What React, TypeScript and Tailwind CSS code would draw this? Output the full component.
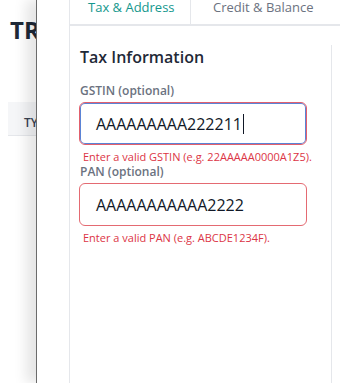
import type { ReactElement } from "react";

const FONT = "font-['Open_Sans','Noto_Sans',sans-serif]";

interface FieldProps {
  label: string;
  value: string;
  error: string;
  focused?: boolean;
}

function Field({ label, value, error, focused = false }: FieldProps): ReactElement {
  return (
    <div>
      <div className="text-[12px] leading-[15px] font-semibold text-[#6b7280]">{label}</div>
      <div
        className={
          focused
            ? "mt-[4px] -ml-px flex h-[43px] w-[228px] items-center rounded-[6px] border border-[#e2606d] pl-[16px] text-[16px] text-[#111827] shadow-[inset_0_0_0_1px_#5b84d6]"
            : "mt-[4px] -ml-px flex h-[43px] w-[228px] items-center rounded-[6px] border border-[#e46a72] pl-[16px] text-[16px] text-[#111827]"
        }
      >
        <span>{value}</span>
        {focused ? <span className="ml-px h-[20px] w-px bg-[#111827]" /> : null}
      </div>
      <p className="mt-[6px] mb-[1px] pl-[3px] text-[11px] leading-[12px] text-[#dc3545]">{error}</p>
    </div>
  );
}

export default function App(): ReactElement {
  return (
    <div className={`relative h-[383px] w-[340px] overflow-hidden bg-white ${FONT}`}>
      {/* page underneath the drawer */}
      <div className="pt-[16px]">
        <h1 className="pl-[10px] text-[24px] leading-[28px] font-bold text-[#1f2937]">TR</h1>
        <div className="mt-[58px] ml-[8px] h-[34px] border-b border-[#e5e7eb] bg-[#f5f6f8] pt-[13px] pl-[16px] text-[12px] leading-[16px] font-semibold text-[#374151]">
          TYPE
        </div>
      </div>

      {/* drawer */}
      <aside className="absolute top-0 right-0 bottom-0 left-[36px] border-l border-[#6b6b6b] bg-white pl-[32px] shadow-[-10px_0_12px_rgba(0,0,0,0.10)]">
        <div className="flex h-full flex-col border-l border-[#e5e7eb]">
          <nav className="flex h-[26px] border-b-2 border-[#e5e7eb] text-[13px] leading-[16px]">
            <div className="w-[120px] pl-[18px] text-[#14978d]">
              <span className="-mt-[1px] block">Tax &amp; Address</span>
            </div>
            <div className="flex-1 border-l border-[#e5e7eb] pl-[22px] text-[#6b7280]">
              <span className="-mt-[1px] block">Credit &amp; Balance</span>
            </div>
          </nav>
          <div className="flex-1 pt-[19px]">
            <section className="h-full w-[262px] border-r border-[#e5e7eb] pl-[10px]">
              <h2 className="text-[16px] leading-[24px] font-semibold text-[#1f2937]">Tax Information</h2>
              <div className="mt-[14px]">
                <Field
                  label="GSTIN (optional)"
                  value="AAAAAAAAA222211"
                  error="Enter a valid GSTIN (e.g. 22AAAAA0000A1Z5)."
                  focused
                />
              </div>
              <div>
                <Field
                  label="PAN (optional)"
                  value="AAAAAAAAAAA2222"
                  error="Enter a valid PAN (e.g. ABCDE1234F)."
                />
              </div>
            </section>
          </div>
        </div>
      </aside>
    </div>
  );
}
